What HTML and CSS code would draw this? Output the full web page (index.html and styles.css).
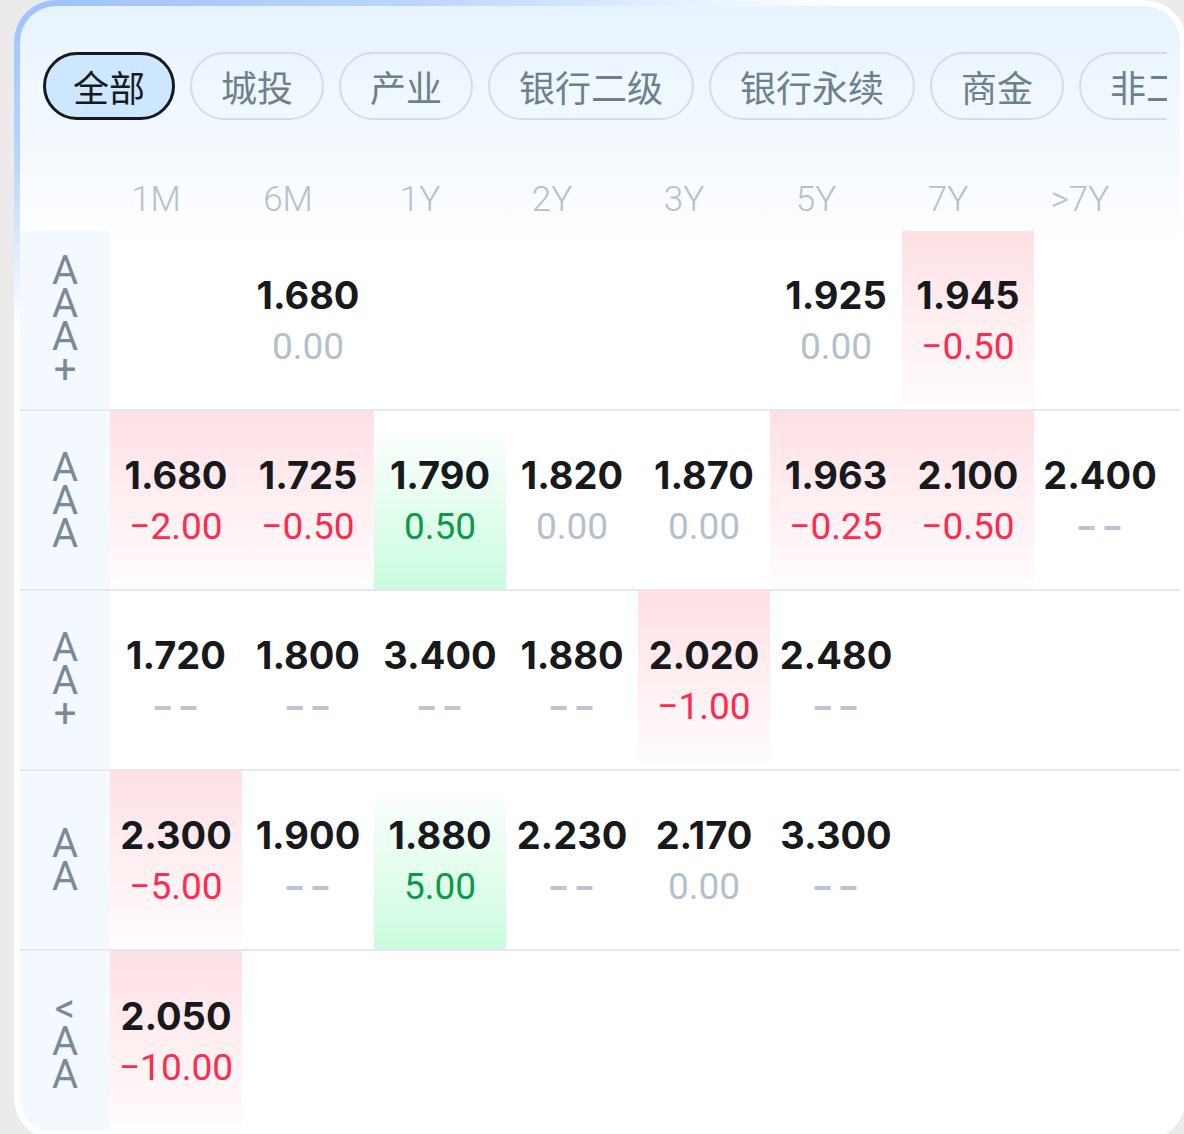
FILE: index.html
```html
<!DOCTYPE html>
<html lang="zh-CN">
<head>
<meta charset="utf-8">
<title>收益率矩阵</title>
<link rel="stylesheet" href="styles.css">
</head>
<body>
<div class="card">
  <div class="tabs">
    <div class="tab active">全部</div>
    <div class="tab">城投</div>
    <div class="tab">产业</div>
    <div class="tab">银行二级</div>
    <div class="tab">银行永续</div>
    <div class="tab">商金</div>
    <div class="tab">非二永</div>
  </div>

  <div class="head">
    <div class="h-label"></div>
    <div class="h">1M</div><div class="h">6M</div><div class="h">1Y</div><div class="h">2Y</div>
    <div class="h">3Y</div><div class="h">5Y</div><div class="h">7Y</div><div class="h">&gt;7Y</div>
  </div>

  <div class="row">
    <div class="label"><span>AAA+</span></div>
    <div class="cell"></div>
    <div class="cell"><b>1.680</b><i class="flat">0.00</i></div>
    <div class="cell"></div>
    <div class="cell"></div>
    <div class="cell"></div>
    <div class="cell"><b>1.925</b><i class="flat">0.00</i></div>
    <div class="cell down"><b>1.945</b><i class="neg">−0.50</i></div>
    <div class="cell"></div>
  </div>

  <div class="row">
    <div class="label"><span>AAA</span></div>
    <div class="cell down"><b>1.680</b><i class="neg">−2.00</i></div>
    <div class="cell down"><b>1.725</b><i class="neg">−0.50</i></div>
    <div class="cell up"><b>1.790</b><i class="pos">0.50</i></div>
    <div class="cell"><b>1.820</b><i class="flat">0.00</i></div>
    <div class="cell"><b>1.870</b><i class="flat">0.00</i></div>
    <div class="cell down"><b>1.963</b><i class="neg">−0.25</i></div>
    <div class="cell down"><b>2.100</b><i class="neg">−0.50</i></div>
    <div class="cell"><b>2.400</b><i class="flat dash">--</i></div>
  </div>

  <div class="row">
    <div class="label"><span>AA+</span></div>
    <div class="cell"><b>1.720</b><i class="flat dash">--</i></div>
    <div class="cell"><b>1.800</b><i class="flat dash">--</i></div>
    <div class="cell"><b>3.400</b><i class="flat dash">--</i></div>
    <div class="cell"><b>1.880</b><i class="flat dash">--</i></div>
    <div class="cell down"><b>2.020</b><i class="neg">−1.00</i></div>
    <div class="cell"><b>2.480</b><i class="flat dash">--</i></div>
    <div class="cell"></div>
    <div class="cell"></div>
  </div>

  <div class="row">
    <div class="label"><span>AA</span></div>
    <div class="cell down"><b>2.300</b><i class="neg">−5.00</i></div>
    <div class="cell"><b>1.900</b><i class="flat dash">--</i></div>
    <div class="cell up"><b>1.880</b><i class="pos">5.00</i></div>
    <div class="cell"><b>2.230</b><i class="flat dash">--</i></div>
    <div class="cell"><b>2.170</b><i class="flat">0.00</i></div>
    <div class="cell"><b>3.300</b><i class="flat dash">--</i></div>
    <div class="cell"></div>
    <div class="cell"></div>
  </div>

  <div class="row last">
    <div class="label"><span>&lt;AA</span></div>
    <div class="cell down"><b>2.050</b><i class="neg">−10.00</i></div>
    <div class="cell"></div>
    <div class="cell"></div>
    <div class="cell"></div>
    <div class="cell"></div>
    <div class="cell"></div>
    <div class="cell"></div>
    <div class="cell"></div>
  </div>
</div>
</body>
</html>
```

FILE: styles.css
```css
* { box-sizing: border-box; }
html, body { margin: 0; padding: 0; }
body {
  background: #ebebeb;
  width: 1184px;
  height: 1134px;
  overflow: hidden;
  font-family: Roboto, "Noto Sans CJK SC", sans-serif;
}
.card {
  margin-left: 14px;
  width: 1172px;
  height: 1140px;
  border: 6px solid transparent;
  border-radius: 42px;
  background:
    linear-gradient(180deg, #e7f3ff 0px, #f2f8ff 110px, #fafcff 200px, #ffffff 240px) padding-box,
    radial-gradient(ellipse 820px 330px at 0 0, #9dc1ff 0%, #bcd6ff 50%, #ffffff 100%) border-box;
  overflow: hidden;
}
.tabs {
  display: flex;
  gap: 15px;
  margin: 46px 13px 0 23px;
  overflow: hidden;
}
.tab {
  flex-shrink: 0;
  height: 68px;
  padding: 0 29px;
  border: 2px solid #d4dce5;
  border-radius: 34px;
  display: flex;
  align-items: center;
  font-family: "Noto Sans CJK SC", sans-serif;
  font-size: 36px;
  color: #6e7f8e;
  white-space: nowrap;
}
.tab.active {
  border: 3px solid #15181c;
  padding: 0 27px;
  background: #cde7ff;
  color: #16191d;
}
.head {
  display: grid;
  grid-template-columns: 70px repeat(8, 132px);
  height: 111px;
  align-items: end;
  padding-bottom: 8px;
}
.h {
  text-align: center;
  font-size: 35px;
  font-weight: 300;
  line-height: 46px;
  color: #b6c0ce;
}
.row {
  display: grid;
  grid-template-columns: 90px repeat(8, 132px);
  height: 180px;
  border-bottom: 2px solid #e5e9ee;
}
.row.last { border-bottom: none; }
.label {
  background: #f4f9ff;
  display: flex;
  align-items: center;
  justify-content: center;
}
.label span {
  width: 28px;
  word-break: break-all;
  text-align: center;
  font-size: 40px;
  font-weight: 400;
  line-height: 33px;
  color: #7a8a98;
}
.cell {
  display: flex;
  flex-direction: column;
  align-items: center;
  justify-content: center;
}
.cell b {
  font-family: Inter, sans-serif;
  font-weight: 700;
  font-size: 38px;
  line-height: 52px;
  color: #17191c;
  margin-top: 2px;
}
.cell i {
  font-style: normal;
  font-size: 37px;
  line-height: 52px;
}
.flat { color: #b5c0cf; }
.cell i.dash {
  display: inline-block;
  font-weight: 700;
  letter-spacing: 2px;
  padding-left: 2px;
  transform: scaleX(1.55);
  color: #bcc5d2;
}
.neg { color: #ff2a4d; }
.pos { color: #0b9a48; }
.down { background: linear-gradient(180deg, #ffe0e5 0%, #fff0f2 55%, #fffdfd 100%); }
.up { background: linear-gradient(180deg, #ffffff 8%, #e6fdef 50%, #cafcdf 100%); }
```
